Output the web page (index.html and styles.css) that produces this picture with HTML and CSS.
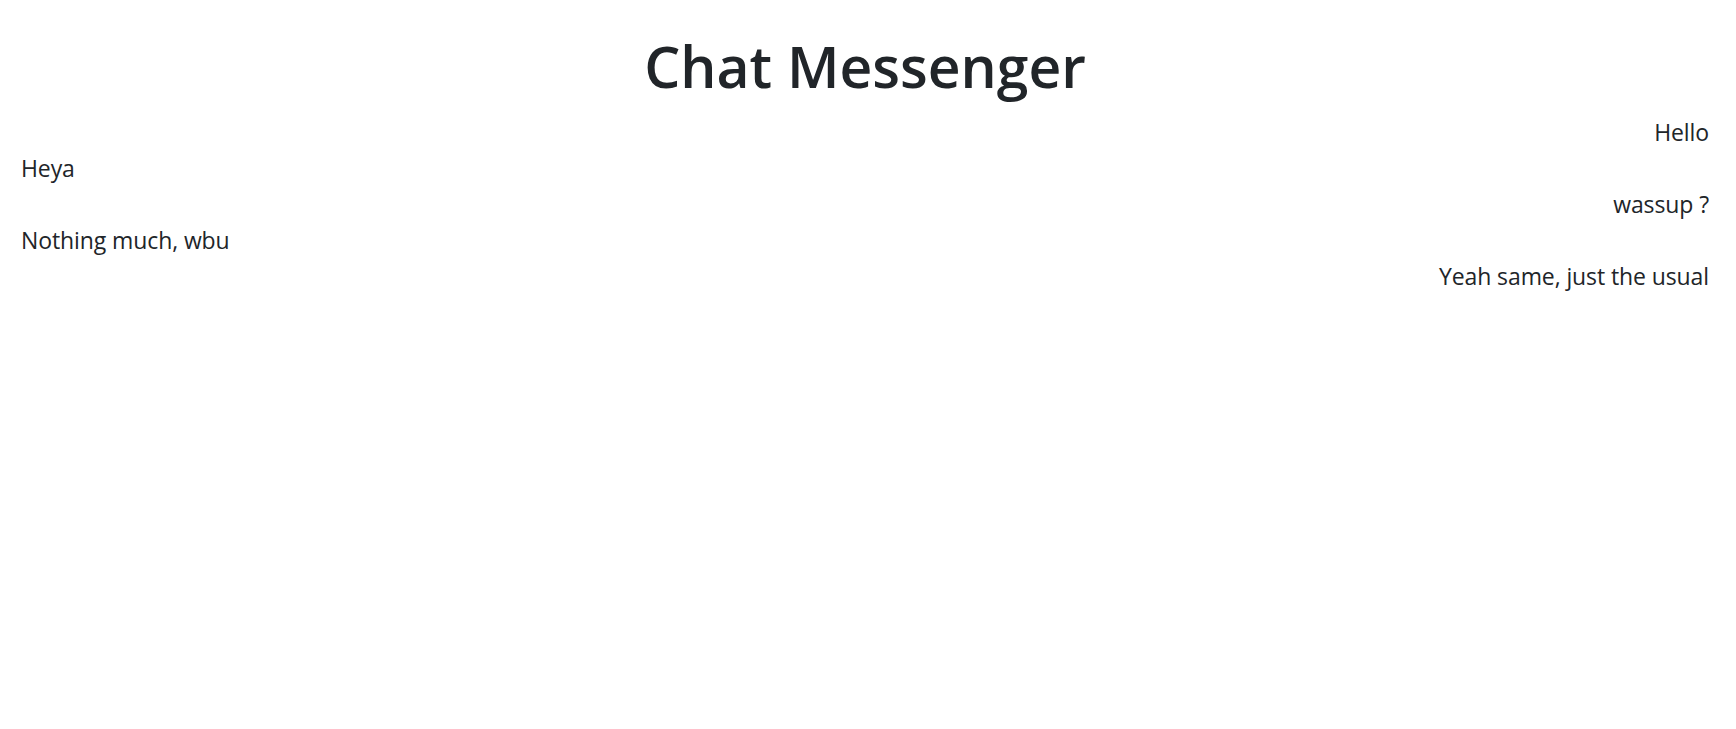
FILE: index.html
```html
<!DOCTYPE html>
<html lang="en">
<head>
<meta charset="utf-8">
<title>Chat Messenger</title>
<link rel="stylesheet" href="styles.css">
</head>
<body>
<div class="page">
  <h1 class="title">Chat Messenger</h1>
  <div class="messages">
    <div class="msg msg-sent">Hello</div>
    <div class="msg msg-received">Heya</div>
    <div class="msg msg-sent">wassup ?</div>
    <div class="msg msg-received">Nothing much, wbu</div>
    <div class="msg msg-sent">Yeah same, just the usual</div>
  </div>
</div>
</body>
</html>
```
FILE: styles.css
```css
html, body {
  margin: 0;
  padding: 0;
  background: #ffffff;
}
body {
  font-family: "Open Sans", "Noto Sans", sans-serif;
  color: #212529;
}
.page {
  padding: 30px 27px 0 21px;
}
.title {
  margin: 0 0 12px;
  font-size: 57px;
  line-height: 72px;
  font-weight: 600;
  text-align: center;
}
.messages {
  display: flex;
  flex-direction: column;
}
.msg {
  font-size: 23px;
  line-height: 36px;
  letter-spacing: -0.1px;
}
.msg-sent {
  text-align: right;
}
.msg-received {
  text-align: left;
}
```
